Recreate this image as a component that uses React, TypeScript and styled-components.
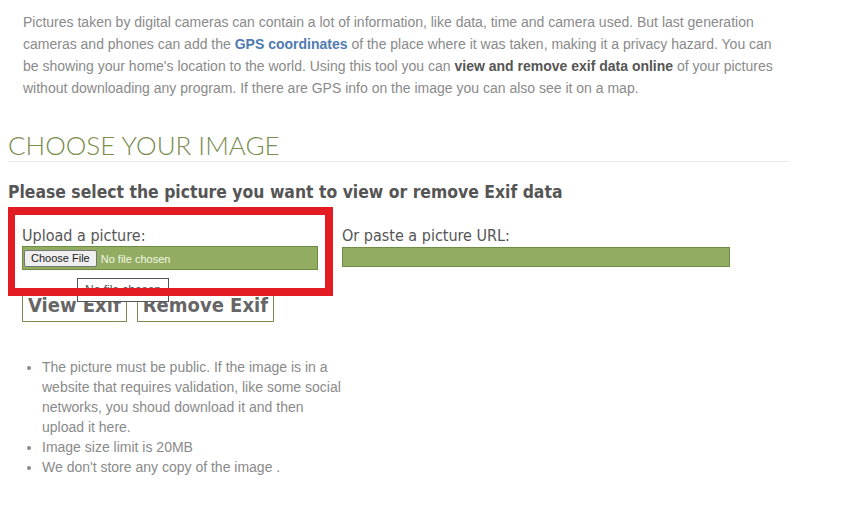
import styled, { createGlobalStyle } from "styled-components"

const GlobalStyle = createGlobalStyle`
  body {
    margin: 8px;
    background: #fff;
    font-family: "Liberation Sans", Arial, sans-serif;
  }
`

const notes = [
  "The picture must be public. If the image is in a website that requires validation, like some social networks, you shoud download it and then upload it here.",
  "Image size limit is 20MB",
  "We don't store any copy of the image .",
]

const App: React.FC = () => {
  return (
    <Page>
      <GlobalStyle />
      <Intro>
        Pictures taken by digital cameras can contain a lot of information, like data, time and camera used. But
        last generation cameras and phones can add the <Highlight>GPS coordinates</Highlight> of the place where it
        was taken, making it a privacy hazard. You can be showing your home's location to the world. Using this tool
        you can <Strong>view and remove exif data online</Strong> of your pictures without downloading any program.
        If there are GPS info on the image you can also see it on a map.
      </Intro>

      <SectionTitle>CHOOSE YOUR IMAGE</SectionTitle>
      <SubTitle>Please select the picture you want to view or remove Exif data</SubTitle>

      <FormArea>
        <Fields>
          <Field>
            <FieldLabel>Upload a picture:</FieldLabel>
            <FileBox>
              <FileInput type="file" />
            </FileBox>
          </Field>
          <Field>
            <FieldLabel>Or paste a picture URL:</FieldLabel>
            <UrlInput type="text" />
          </Field>
        </Fields>

        <Buttons>
          <ActionButton>View Exif</ActionButton>
          <ActionButton>Remove Exif</ActionButton>
        </Buttons>

        <Tooltip>No file chosen</Tooltip>
        <Highlighter />
      </FormArea>

      <Notes>
        {notes.map((note) => (
          <li key={note}>{note}</li>
        ))}
      </Notes>
    </Page>
  )
}

const Page = styled.div`
  width: 782px;
`

const Intro = styled.p`
  margin: 3px 0 0;
  padding: 0 15px;
  font-size: 14px;
  line-height: 22px;
  color: #8a8a8a;
`

const Highlight = styled.b`
  color: #4f7bb1;
`

const Strong = styled.b`
  color: #555;
`

const SectionTitle = styled.h2`
  margin: 31px 0 0;
  padding-bottom: 1px;
  border-bottom: 1px solid #ececec;
  font-family: Lato, "Open Sans", sans-serif;
  font-weight: 300;
  font-size: 26px;
  line-height: 30px;
  color: #7a8b4e;
`

const SubTitle = styled.h3`
  margin: 18px 0 0;
  font-family: "DejaVu Sans Condensed", "DejaVu Sans", sans-serif;
  font-weight: bold;
  font-size: 17.4px;
  line-height: 24px;
  color: #555;
`

const FormArea = styled.div`
  position: relative;
  padding: 22px 14px 0;
`

const Fields = styled.div`
  display: grid;
  grid-template-columns: 296px 388px;
  column-gap: 24px;
  align-items: start;
`

const Field = styled.div`
  display: flex;
  flex-direction: column;
`

const FieldLabel = styled.label`
  font-family: "DejaVu Sans Condensed", "DejaVu Sans", sans-serif;
  font-size: 16px;
  line-height: 20px;
  color: #555;
`

const FileBox = styled.div`
  height: 22px;
  display: flex;
  align-items: center;
  padding: 0 1px;
  background: #92ad62;
  border: 1px solid #6f8c44;
`

const FileInput = styled.input`
  font-family: "Liberation Sans", Arial, sans-serif;
  font-size: 11px;
  color: #f2f7e4;

  &::file-selector-button {
    height: 17px;
    padding: 0 6px;
    margin-right: 4px;
    font-family: "Liberation Sans", Arial, sans-serif;
    font-size: 11px;
    color: #222;
    background: #efefef;
    border: 1px solid #767676;
    border-radius: 2px;
  }
`

const UrlInput = styled.input`
  box-sizing: border-box;
  height: 20px;
  margin-top: 1px;
  background: #92ad62;
  border: 1px solid #6f8c44;
`

const Buttons = styled.div`
  display: flex;
  gap: 10px;
  margin-top: 18px;
`

const ActionButton = styled.button`
  height: 34px;
  padding: 0 5px;
  background: #fff;
  border: 1px solid #7a8a50;
  font-family: "DejaVu Sans Condensed", "DejaVu Sans", sans-serif;
  font-weight: bold;
  font-size: 20px;
  color: #666;
`

const Tooltip = styled.div`
  position: absolute;
  left: 69px;
  top: 74px;
  box-sizing: border-box;
  width: 92px;
  height: 24px;
  padding: 4px 7px 0;
  overflow: hidden;
  white-space: nowrap;
  background: #fff;
  border: 1px solid #555;
  font-size: 12px;
  line-height: 14px;
  color: #555;
`

const Highlighter = styled.div`
  position: absolute;
  left: -1px;
  top: 3px;
  box-sizing: border-box;
  width: 326px;
  height: 89px;
  border: 8px solid #e31b23;
  pointer-events: none;
`

const Notes = styled.ul`
  margin: 35px 0 0;
  padding-left: 34px;
  font-size: 14px;
  line-height: 20px;
  color: #8a8a8a;
  width: 300px;
`

export default App
